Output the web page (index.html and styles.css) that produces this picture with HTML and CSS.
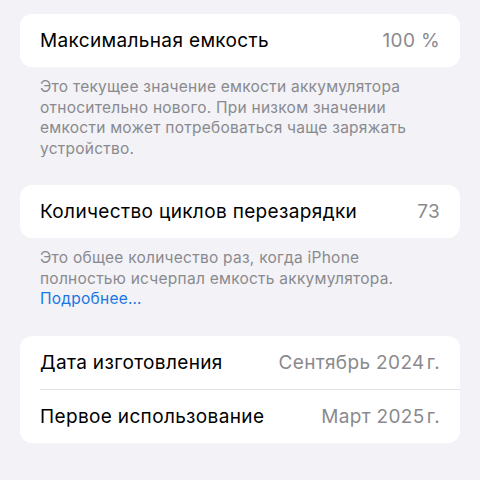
FILE: index.html
```html
<!DOCTYPE html>
<html lang="ru">
<head>
<meta charset="utf-8">
<link rel="stylesheet" href="styles.css">
</head>
<body>
<div class="page">
  <section class="group">
    <div class="card">
      <div class="row"><span class="label">Максимальная емкость</span><span class="value">100 %</span></div>
    </div>
    <p class="footer">Это текущее значение емкости аккумулятора относительно нового. При низком значении емкости может потребоваться чаще заряжать устройство.</p>
  </section>
  <section class="group">
    <div class="card">
      <div class="row"><span class="label">Количество циклов перезарядки</span><span class="value">73</span></div>
    </div>
    <p class="footer">Это общее количество раз, когда iPhone полностью исчерпал емкость аккумулятора.<br><a class="link">Подробнее…</a></p>
  </section>
  <section class="group">
    <div class="card">
      <div class="row"><span class="label">Дата изготовления</span><span class="value">Сентябрь 2024&#8202;г.</span></div>
      <div class="row sep"><span class="label">Первое использование</span><span class="value">Март 2025&#8202;г.</span></div>
    </div>
  </section>
</div>
</body>
</html>
```
FILE: styles.css
```css
html, body {
  margin: 0;
  padding: 0;
  background: #f2f2f7;
}
body {
  font-family: Inter, "Noto Sans", sans-serif;
  -webkit-font-smoothing: antialiased;
}
.page {
  padding: 14px 20px 0 20px;
  display: flex;
  flex-direction: column;
}
.group {
  margin-bottom: 26px;
}
.card {
  background: #ffffff;
  border-radius: 12px;
  overflow: hidden;
}
.row {
  height: 53px;
  display: flex;
  align-items: center;
  justify-content: space-between;
  margin-left: 20px;
  padding-right: 20px;
  font-size: 19px;
  letter-spacing: 0.35px;
}
.row.sep {
  border-top: 1px solid #e3e3e6;
}
.label {
  color: #000;
}
.value {
  color: #8a8a8e;
}
.footer {
  margin: 0;
  padding: 10px 20px 0 20px;
  font-size: 15.5px;
  line-height: 20.5px;
  color: #8a8a8e;
  letter-spacing: 0.25px;
}
.link {
  color: #1a76e3;
}
```
